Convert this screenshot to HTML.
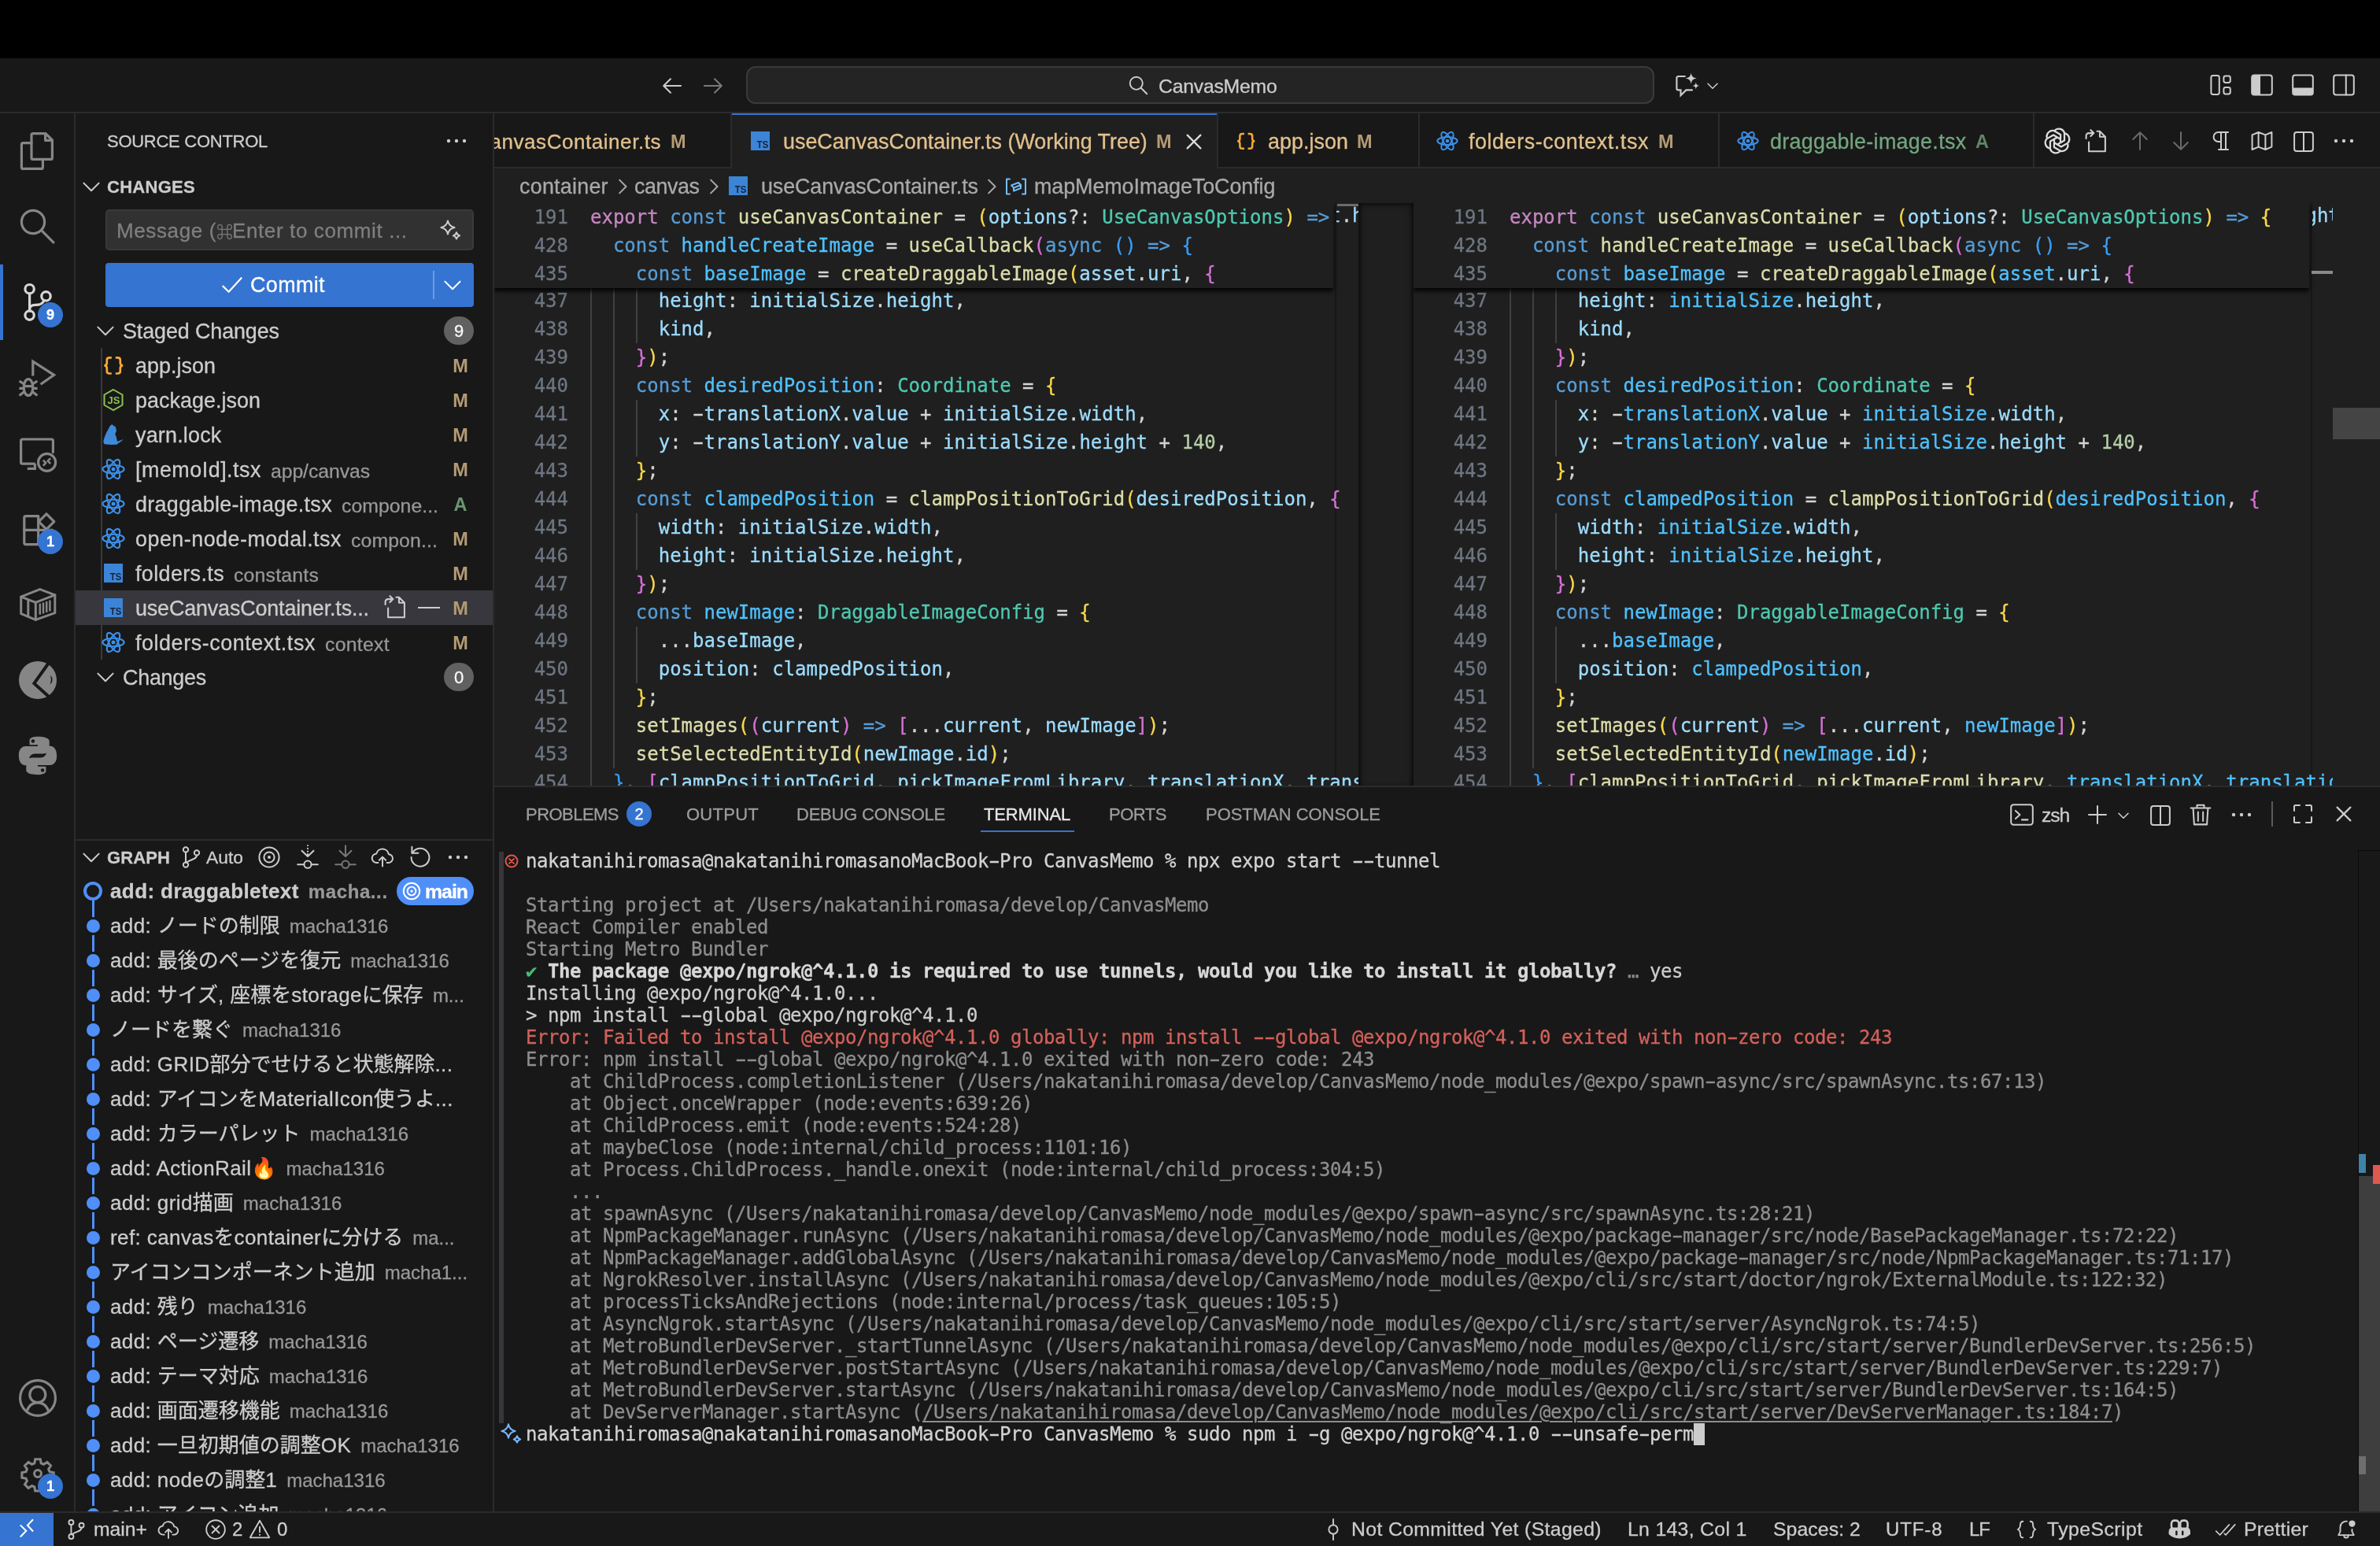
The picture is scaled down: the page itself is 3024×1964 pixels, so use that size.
<!DOCTYPE html>
<html lang="ja"><head><meta charset="utf-8"><title>CanvasMemo</title>
<style>
html,body{margin:0;padding:0;background:#181818;}
body{width:3024px;height:1964px;position:relative;overflow:hidden;font-family:"Liberation Sans","Noto Sans CJK JP",sans-serif;color:#ccc;-webkit-font-smoothing:antialiased;}
.t{position:absolute;white-space:pre;-webkit-text-stroke:0.3px currentColor;}
.b{position:absolute;}
.i{position:absolute;overflow:visible;}
.mono{font-family:"DejaVu Sans Mono","Liberation Mono",monospace;}
.clip{position:absolute;overflow:hidden;}
.cl,.ln,.tl{-webkit-text-stroke:0.3px currentColor;}
.cl{position:absolute;left:0;height:36px;line-height:36px;font-size:24px;white-space:pre;font-family:"DejaVu Sans Mono","Liberation Mono",monospace;color:#d4d4d4;letter-spacing:0px;}
.ln{position:absolute;height:36px;line-height:36px;font-size:24px;white-space:pre;font-family:"DejaVu Sans Mono","Liberation Mono",monospace;color:#6e7681;text-align:right;width:80px;}
.tl{position:absolute;left:0;height:28px;line-height:28px;font-size:24px;white-space:pre;font-family:"DejaVu Sans Mono","Liberation Mono",monospace;color:#ccc;letter-spacing:-0.45px;}
.hy{display:inline-block;transform:scaleX(1.75);}
.k{color:#569cd6}.e{color:#c586c0}.f{color:#dcdcaa}.v{color:#9cdcfe}.c{color:#4fc1ff}.ty{color:#4ec9b0}.n{color:#b5cea8}
.b1{color:#f9d849}.b2{color:#d670d6}.b3{color:#3a9cf5}
.jp{font-family:"Liberation Sans","Noto Sans CJK JP",sans-serif;}
</style></head><body><div id="root" style="position:absolute;left:0;top:0;width:3024px;height:1964px;overflow:hidden;will-change:transform;">

<div class="b" style="left:0px;top:0px;width:3024px;height:74px;background:#000;"></div>
<div class="b" style="left:0px;top:74px;width:3024px;height:68px;background:#181818;"></div>
<div class="b" style="left:0px;top:142px;width:3024px;height:2px;background:#2b2b2b;"></div>
<svg class="i" style="left:838.0px;top:93.0px;color:#ccc;" width="32" height="32" viewBox="0 0 16 16" fill="none" stroke="currentColor" stroke-width="1" stroke-linecap="round" stroke-linejoin="round"><path d="M13.5 8H2.8M7 3.6 2.6 8 7 12.4"/></svg>
<svg class="i" style="left:890.0px;top:93.0px;color:#7a7a7a;" width="32" height="32" viewBox="0 0 16 16" fill="none" stroke="currentColor" stroke-width="1" stroke-linecap="round" stroke-linejoin="round"><path d="M2.5 8h10.7M9 3.6 13.4 8 9 12.4"/></svg>
<div class="b" style="left:948px;top:84px;width:1154px;height:48px;background:#242424;border:2px solid #3a3a3a;box-sizing:border-box;border-radius:12px;"></div>
<svg class="i" style="left:1431.0px;top:93.0px;color:#ccc;" width="30" height="30" viewBox="0 0 16 16" fill="none" stroke="currentColor" stroke-width="1" stroke-linecap="round" stroke-linejoin="round"><circle cx="6.8" cy="6.8" r="4.3"/><path d="M10 10l4 4"/></svg>
<div class="t" style="left:1472px;top:91.5px;height:35px;line-height:35px;font-size:24.8px;color:#ccc;letter-spacing:-0.249px;">CanvasMemo</div>
<svg class="i" style="left:2127.0px;top:91.0px;color:#ccc;" width="34" height="34" viewBox="0 0 16 16" fill="none" stroke="currentColor" stroke-width="1" stroke-linecap="round" stroke-linejoin="round"><path d="M6.500 2.800H2.600a1 1 0 0 0-1 1V10a1 1 0 0 0 1 1H4v3.200L7.200 11h3.600" stroke-linejoin="miter"/><path d="M10.200 .75c.5 2.300 1 2.800 3.300 3.300-2.300.5-2.800 1-3.300 3.300-.5-2.300-1-2.800-3.300-3.300 2.300-.5 2.800-1 3.300-3.300z" fill="currentColor" stroke="none"/><path d="M13.100 6.400c.3 1.500.6 1.800 2.100 2.100-1.500.3-1.800.6-2.100 2.100-.3-1.500-.6-1.800-2.100-2.100 1.500-.3 1.800-.6 2.100-2.100z" fill="currentColor" stroke="none"/></svg>
<svg class="i" style="left:2166.0px;top:99.0px;color:#ccc;" width="20" height="20" viewBox="0 0 16 16" fill="none" stroke="currentColor" stroke-width="1.2" stroke-linecap="round" stroke-linejoin="round"><path d="M3.2 5.8 8 10.6l4.8-4.8"/></svg>
<svg class="i" style="left:2806.0px;top:92.0px;color:#ccc;" width="32" height="32" viewBox="0 0 16 16" fill="none" stroke="currentColor" stroke-width="1" stroke-linecap="round" stroke-linejoin="round"><rect x="1.700" y="2" width="5.200" height="12" rx="1.200"/><rect x="9.700" y="2.300" width="4.200" height="4.200" rx="1.200"/><rect x="9.700" y="9.500" width="4.200" height="4.200" rx="1.200"/></svg>
<svg class="i" style="left:2858.0px;top:92.0px;color:#ccc;" width="32" height="32" viewBox="0 0 16 16" fill="none" stroke="currentColor" stroke-width="1" stroke-linecap="round" stroke-linejoin="round"><rect x="1.600" y="1.700" width="12.800" height="12.600" rx="1.500"/><path d="M2 3a1 1 0 0 1 1-1h4v12H3a1 1 0 0 1-1-1z" fill="currentColor" stroke="none"/></svg>
<svg class="i" style="left:2910.0px;top:92.0px;color:#ccc;" width="32" height="32" viewBox="0 0 16 16" fill="none" stroke="currentColor" stroke-width="1" stroke-linecap="round" stroke-linejoin="round"><rect x="1.600" y="1.700" width="12.800" height="12.600" rx="1.500"/><path d="M2 9.800h12v3.200a1 1 0 0 1-1 1H3a1 1 0 0 1-1-1z" fill="currentColor" stroke="none"/></svg>
<svg class="i" style="left:2962.0px;top:92.0px;color:#ccc;" width="32" height="32" viewBox="0 0 16 16" fill="none" stroke="currentColor" stroke-width="1" stroke-linecap="round" stroke-linejoin="round"><rect x="1.600" y="1.700" width="12.800" height="12.600" rx="1.500"/><path d="M9.400 1.700v12.600"/></svg>
<div class="b" style="left:0px;top:144px;width:94px;height:1776px;background:#181818;"></div>
<div class="b" style="left:94px;top:144px;width:2px;height:1776px;background:#2b2b2b;"></div>
<svg class="i" style="left:24.0px;top:168.0px;color:#868686;" width="48" height="48" viewBox="0 0 24 24" fill="none" stroke="currentColor" stroke-width="1.6" stroke-linecap="round" stroke-linejoin="round"><path d="M9 .8h8L21.200 5v11.200a1 1 0 0 1-1 1H9a1 1 0 0 1-1-1V1.800a1 1 0 0 1 1-1z"/><path d="M16.800 .8v4.400h4.400"/><path d="M8 6.800H2.700a1 1 0 0 0-1 1v14.400a1 1 0 0 0 1 1h11.500a1 1 0 0 0 1-1v-5"/></svg>
<svg class="i" style="left:24.0px;top:264.0px;color:#868686;" width="48" height="48" viewBox="0 0 24 24" fill="none" stroke="currentColor" stroke-width="1.6" stroke-linecap="round" stroke-linejoin="round"><circle cx="9" cy="9" r="7.300"/><path d="M14.200 14.200 22.400 22.400" stroke-linecap="butt"/></svg>
<div class="b" style="left:0px;top:336px;width:4px;height:96px;background:#3574d1;"></div>
<svg class="i" style="left:24.0px;top:360.0px;color:#d7d7d7;" width="48" height="48" viewBox="0 0 24 24" fill="none" stroke="currentColor" stroke-width="1.6" stroke-linecap="round" stroke-linejoin="round"><circle cx="6.800" cy="3.600" r="2.850"/><circle cx="6.800" cy="20.300" r="2.850"/><circle cx="17.250" cy="8.200" r="2.850"/><path d="M6.800 6.500v11M16 10.800c-1 2.600-3 2.900-5.500 2.900-2.200 0-3.700 1-3.700 3"/></svg>
<svg class="i" style="left:24.0px;top:456.0px;color:#868686;" width="48" height="48" viewBox="0 0 24 24" fill="none" stroke="currentColor" stroke-width="1.6" stroke-linecap="round" stroke-linejoin="round"><path d="M8.900 10.800V1.600L22.300 10.200 13.800 16.100" stroke-linecap="butt" stroke-linejoin="miter"/><ellipse cx="6" cy="18" rx="2.900" ry="5.200"/><path d="M3.100 17.300h5.800M.2 18.700h2.900M8.900 18.700h2.900M.3 14l3 2M11.700 14l-3 2M.3 23.300l3-2.400M11.700 23.300l-3-2.400" stroke-linecap="butt"/></svg>
<svg class="i" style="left:24.0px;top:552.0px;color:#868686;" width="48" height="48" viewBox="0 0 24 24" fill="none" stroke="currentColor" stroke-width="1.6" stroke-linecap="round" stroke-linejoin="round"><path d="M9.800 18.600H2.300a1 1 0 0 1-1-1V4a1 1 0 0 1 1-1h18.400a1 1 0 0 1 1 1v7.200"/><path d="M5.400 21.700h5.600M10.200 18.600v3.100" stroke-linecap="butt"/><circle cx="17.800" cy="17.700" r="5.500"/><path d="M15.400 16.300l1.700 1.700-1.700 1.800M20.100 15.100l-1.800 1.700 1.800 1.700" stroke-width="1.300" stroke-linecap="butt"/></svg>
<svg class="i" style="left:24.0px;top:648.0px;color:#868686;" width="48" height="48" viewBox="0 0 24 24" fill="none" stroke="currentColor" stroke-width="1.6" stroke-linecap="round" stroke-linejoin="round"><path d="M12.350 3.850H4.400a1 1 0 0 0-1 1v15.950a1 1 0 0 0 1 1h15.900a1 1 0 0 0 1-1v-8.150H12.350z" /><path d="M3.400 12.650h9M12.350 12.650v9.100"/><path d="M17.500 2.400l4.900 4.900-4.900 4.900-4.900-4.900z"/></svg>
<svg class="i" style="left:24.0px;top:744.0px;color:#868686;" width="48" height="48" viewBox="0 0 24 24" fill="none" stroke="currentColor" stroke-width="1.6" stroke-linecap="round" stroke-linejoin="round"><g stroke-width="1.500"><path d="M13.350 2.300 22.900 5.900v11.450L10.650 21.700 1.350 17.800V7.100z"/><path d="M1.350 7.100l9.300 3.550L22.900 5.900M10.650 10.650V21.700M5.900 9v10.600"/><path d="M13.400 11.400v7M15.500 10.700v7M17.600 10v7M19.700 9.300v7" stroke-width="1.250" stroke-linecap="butt"/></g></svg>
<svg class="i" style="left:24.0px;top:840.0px;color:#868686;" width="48" height="48" viewBox="0 0 24 24" fill="none" stroke="currentColor" stroke-width="1.6" stroke-linecap="round" stroke-linejoin="round"><circle cx="12" cy="12" r="12" fill="currentColor" stroke="none"/><path d="M19 1 9.700 14.100 19 22.500" stroke="#181818" stroke-width="2" fill="none" stroke-linecap="butt" stroke-linejoin="miter"/><path d="M20 9.200c1.600.3 1.900 4.600-.3 5.300.9-1.700.9-3.600.3-5.300z" fill="#181818" stroke="none"/></svg>
<svg class="i" style="left:24.0px;top:936.0px;color:#868686;" width="48" height="48" viewBox="0 0 24 24" fill="none" stroke="currentColor" stroke-width="1.6" stroke-linecap="round" stroke-linejoin="round"><g transform="translate(12 12) scale(1.270) translate(-12 -12)"><path d="M11.900 2.500c-4.200 0-4 1.800-4 1.800v2.300h4.100v.7H6.200S2.500 6.900 2.500 11.900s3.200 4.900 3.200 4.900h1.900v-2.600s-.1-3.200 3.200-3.200h4s3 .1 3-2.900V4.900s.5-2.400-5.900-2.400zM9.600 3.800a.9.900 0 1 1 0 1.800.9.900 0 0 1 0-1.800z" fill="currentColor" stroke="none"/><path d="M12.100 21.500c4.200 0 4-1.800 4-1.800v-2.300H12v-.7h5.800s3.700.4 3.700-4.600-3.200-4.900-3.200-4.900h-1.900v2.600s.1 3.200-3.200 3.200h-4s-3-.1-3 2.900v3.200s-.5 2.400 5.900 2.400zm2.300-1.300a.9.900 0 1 1 0-1.800.9.900 0 0 1 0 1.800z" fill="currentColor" stroke="none"/></g></svg>
<svg class="i" style="left:24.0px;top:1752.0px;color:#868686;" width="48" height="48" viewBox="0 0 24 24" fill="none" stroke="currentColor" stroke-width="1.6" stroke-linecap="round" stroke-linejoin="round"><circle cx="12" cy="12" r="11.200"/><circle cx="11.900" cy="9.850" r="5"/><path d="M4.900 20.600c1.300-3.700 3.800-5.700 7-5.700s5.800 2 7.100 5.700"/></svg>
<svg class="i" style="left:24.0px;top:1848.0px;color:#868686;" width="48" height="48" viewBox="0 0 24 24" fill="none" stroke="currentColor" stroke-width="1.6" stroke-linecap="round" stroke-linejoin="round"><g transform="translate(12 12) scale(0.960) translate(-12 -12)"><circle cx="12" cy="12" r="2.300"/><path d="M10.300 2.500h3.400l.5 2.700 1.700.7 2.300-1.500 2.400 2.400-1.500 2.300.7 1.700 2.700.5v3.400l-2.700.5-.7 1.700 1.500 2.300-2.400 2.400-2.300-1.500-1.700.7-.5 2.700h-3.400l-.5-2.700-1.700-.7-2.300 1.500-2.400-2.400 1.500-2.300-.7-1.700-2.700-.5v-3.400l2.700-.5.700-1.700-1.500-2.300 2.400-2.400 2.300 1.500 1.700-.7z" stroke-linejoin="miter"/></g></svg>
<div class="b" style="left:48px;top:384px;width:32px;height:32px;background:#3574d1;border-radius:16px;"></div>
<div class="t" style="left:48px;top:387.5px;height:25px;line-height:25px;font-size:18px;color:#fff;font-weight:700;width:32px;text-align:center;">9</div>
<div class="b" style="left:48px;top:672px;width:32px;height:32px;background:#3574d1;border-radius:16px;"></div>
<div class="t" style="left:48px;top:675.5px;height:25px;line-height:25px;font-size:18px;color:#fff;font-weight:700;width:32px;text-align:center;">1</div>
<div class="b" style="left:48px;top:1872px;width:32px;height:32px;background:#3574d1;border-radius:16px;"></div>
<div class="t" style="left:48px;top:1875.5px;height:25px;line-height:25px;font-size:18px;color:#fff;font-weight:700;width:32px;text-align:center;">1</div>
<div class="b" style="left:96px;top:144px;width:530px;height:1776px;background:#181818;"></div>
<div class="b" style="left:626px;top:144px;width:2px;height:1776px;background:#2b2b2b;"></div>
<div class="t" style="left:136px;top:163.5px;height:31px;line-height:31px;font-size:22px;color:#ccc;letter-spacing:-0.271px;">SOURCE CONTROL</div>
<svg class="i" style="left:564.0px;top:163.0px;color:#ccc;" width="32" height="32" viewBox="0 0 16 16" fill="none" stroke="currentColor" stroke-width="1" stroke-linecap="round" stroke-linejoin="round"><g fill="currentColor" stroke="none"><circle cx="3" cy="8" r="1.100"/><circle cx="8" cy="8" r="1.100"/><circle cx="13" cy="8" r="1.100"/></g></svg>
<svg class="i" style="left:100.0px;top:221.0px;color:#ccc;" width="32" height="32" viewBox="0 0 16 16" fill="none" stroke="currentColor" stroke-width="1" stroke-linecap="round" stroke-linejoin="round"><path d="M3.2 5.8 8 10.6l4.8-4.8"/></svg>
<div class="t" style="left:136px;top:221.5px;height:31px;line-height:31px;font-size:22px;color:#ccc;font-weight:700;letter-spacing:0.284px;">CHANGES</div>
<div class="b" style="left:134px;top:266px;width:468px;height:52px;background:#313131;border-radius:5px;border:2px solid #3a3a3a;box-sizing:border-box;"></div>
<div class="t" style="left:148px;top:275.0px;height:36px;line-height:36px;font-size:26px;color:#7f7f7f;letter-spacing:0.620px;">Message (<span style="font-size:21px;letter-spacing:-1px">⌘</span>Enter to commit ...</div>
<svg class="i" style="left:556.0px;top:276.0px;color:#ccc;" width="32" height="32" viewBox="0 0 16 16" fill="none" stroke="currentColor" stroke-width="1" stroke-linecap="round" stroke-linejoin="round"><path d="M6.5 2.2c.5 2.6 1.7 3.8 4.3 4.3-2.6.5-3.8 1.7-4.3 4.3-.5-2.6-1.7-3.8-4.3-4.3 2.6-.5 3.8-1.7 4.3-4.3z"/><path d="M12 9.6c.3 1.3.8 1.8 2.1 2.1-1.3.3-1.8.8-2.1 2.1-.3-1.3-.8-1.8-2.1-2.1 1.3-.3 1.8-.8 2.1-2.1z"/></svg>
<div class="b" style="left:134px;top:334px;width:468px;height:56px;background:#3574d1;border-radius:4px;"></div>
<svg class="i" style="left:279.0px;top:346.0px;color:#fff;" width="32" height="32" viewBox="0 0 16 16" fill="none" stroke="currentColor" stroke-width="1.1" stroke-linecap="round" stroke-linejoin="round"><path d="M2.2 8.8 5.8 12.4 13.8 3.6"/></svg>
<div class="t" style="left:318px;top:343.0px;height:38px;line-height:38px;font-size:26.9px;color:#fff;letter-spacing:0.391px;">Commit</div>
<div class="b" style="left:550px;top:344px;width:2px;height:36px;background:#6f9be0;"></div>
<svg class="i" style="left:559.0px;top:346.0px;color:#fff;" width="32" height="32" viewBox="0 0 16 16" fill="none" stroke="currentColor" stroke-width="1" stroke-linecap="round" stroke-linejoin="round"><path d="M3.2 5.8 8 10.6l4.8-4.8"/></svg>
<svg class="i" style="left:118.0px;top:404.0px;color:#ccc;" width="32" height="32" viewBox="0 0 16 16" fill="none" stroke="currentColor" stroke-width="1" stroke-linecap="round" stroke-linejoin="round"><path d="M3.2 5.8 8 10.6l4.8-4.8"/></svg>
<div class="t" style="left:156px;top:402.0px;height:38px;line-height:38px;font-size:26.9px;color:#ccc;letter-spacing:-0.101px;">Staged Changes</div>
<div class="b" style="left:564px;top:402px;width:38px;height:36px;background:#616161;border-radius:18px;"></div>
<div class="t" style="left:564px;top:404.5px;height:31px;line-height:31px;font-size:22px;color:#f8f8f8;width:38px;text-align:center;">9</div>
<div class="b" style="left:128px;top:442px;width:2px;height:396px;background:#3a3a3a;"></div>
<svg class="i" style="left:130.0px;top:450.0px" width="28" height="28" viewBox="0 0 28 28" fill="none" stroke="#f5a93a" stroke-width="2.700" stroke-linecap="butt"><path d="M11.800 4.300H9q-3.200 0-3.200 3V11q0 3.350-3.400 3.350 3.400 0 3.400 3.350v3.800q0 3 3.200 3h2.800"/><path d="M16.800 4.300h2.800q3.200 0 3.200 3V11q0 3.350 3.400 3.350-3.400 0-3.400 3.350v3.800q0 3-3.200 3h-2.800"/></svg>
<div class="t" style="left:172px;top:446.0px;height:38px;line-height:38px;font-size:26.9px;color:#ccc;letter-spacing:0.037px;">app.json</div>
<div class="t" style="left:566px;top:448.5px;height:33px;line-height:33px;font-size:23.5px;color:#b49b73;font-weight:700;width:38px;text-align:center;-webkit-text-stroke:0;">M</div>
<svg class="i" style="left:131.0px;top:493.0px" width="26" height="30" viewBox="0 0 26 30"><path d="M13 2 24.500 8.500v13L13 28 1.500 21.500v-13z" fill="none" stroke="#8cc152" stroke-width="2"/><text x="13.500" y="20" text-anchor="middle" font-family="Liberation Sans,sans-serif" font-weight="700" font-size="13" fill="#8cc152">JS</text></svg>
<div class="t" style="left:172px;top:490.0px;height:38px;line-height:38px;font-size:26.9px;color:#ccc;letter-spacing:0.039px;">package.json</div>
<div class="t" style="left:566px;top:492.5px;height:33px;line-height:33px;font-size:23.5px;color:#b49b73;font-weight:700;width:38px;text-align:center;-webkit-text-stroke:0;">M</div>
<svg class="i" style="left:130.0px;top:538.0px" width="28" height="28" viewBox="0 0 28 28"><path d="M12.100 1.200c1.300.3 2 1.100 2.300 2.300l1.800-.5c.5 1.900 1.600 3.600 1.700 5.800 0 1.800-1.100 3-1.700 4.600 1 2 2 4.300 2.300 7 .1.800.3 1.500.6 2.300 2.600-.5 5.200-1.700 7.600-2.900-1.600 2.300-4.300 4.300-7 5.800-.4.800-1 1.200-1.800 1.200-5 .2-10.100.1-15.100-.6-1.300-1-1.500-2.900-1.200-4.600.5-2.500 1.400-4.700 2.400-7 .9-2.400 2-4.700 3.500-7 .6-1.200 1-2.400 1.700-3.500.7-1.300 1.800-2.300 2.900-2.900z" fill="#3f8ad8"/></svg>
<div class="t" style="left:172px;top:534.0px;height:38px;line-height:38px;font-size:26.9px;color:#ccc;letter-spacing:0.207px;">yarn.lock</div>
<div class="t" style="left:566px;top:536.5px;height:33px;line-height:33px;font-size:23.5px;color:#b49b73;font-weight:700;width:38px;text-align:center;-webkit-text-stroke:0;">M</div>
<svg class="i" style="left:129.0px;top:581.0px" width="30" height="30" viewBox="-15 -15 30 30" fill="none" stroke="#3b8fe8" stroke-width="2.100"><ellipse rx="13.600" ry="5.300"/><ellipse rx="13.600" ry="5.300" transform="rotate(60)"/><ellipse rx="13.600" ry="5.300" transform="rotate(120)"/><circle r="2.500" fill="#3b8fe8" stroke="none"/></svg>
<div class="t" style="left:172px;top:578.0px;height:38px;line-height:38px;font-size:26.9px;color:#ccc;letter-spacing:0.503px;">[memoId].tsx</div>
<div class="t" style="left:344px;top:580.5px;height:35px;line-height:35px;font-size:24.8px;color:#989898;letter-spacing:-0.084px;">app/canvas</div>
<div class="t" style="left:566px;top:580.5px;height:33px;line-height:33px;font-size:23.5px;color:#b49b73;font-weight:700;width:38px;text-align:center;-webkit-text-stroke:0;">M</div>
<svg class="i" style="left:129.0px;top:625.0px" width="30" height="30" viewBox="-15 -15 30 30" fill="none" stroke="#3b8fe8" stroke-width="2.100"><ellipse rx="13.600" ry="5.300"/><ellipse rx="13.600" ry="5.300" transform="rotate(60)"/><ellipse rx="13.600" ry="5.300" transform="rotate(120)"/><circle r="2.500" fill="#3b8fe8" stroke="none"/></svg>
<div class="t" style="left:172px;top:622.0px;height:38px;line-height:38px;font-size:26.9px;color:#ccc;letter-spacing:0.330px;">draggable-image.tsx</div>
<div class="t" style="left:434px;top:624.5px;height:35px;line-height:35px;font-size:24.8px;color:#989898;letter-spacing:0.031px;">compone...</div>
<div class="t" style="left:566px;top:624.5px;height:33px;line-height:33px;font-size:23.5px;color:#6a9673;font-weight:700;width:38px;text-align:center;-webkit-text-stroke:0;">A</div>
<svg class="i" style="left:129.0px;top:669.0px" width="30" height="30" viewBox="-15 -15 30 30" fill="none" stroke="#3b8fe8" stroke-width="2.100"><ellipse rx="13.600" ry="5.300"/><ellipse rx="13.600" ry="5.300" transform="rotate(60)"/><ellipse rx="13.600" ry="5.300" transform="rotate(120)"/><circle r="2.500" fill="#3b8fe8" stroke="none"/></svg>
<div class="t" style="left:172px;top:666.0px;height:38px;line-height:38px;font-size:26.9px;color:#ccc;letter-spacing:0.489px;">open-node-modal.tsx</div>
<div class="t" style="left:446px;top:668.5px;height:35px;line-height:35px;font-size:24.8px;color:#989898;letter-spacing:0.122px;">compon...</div>
<div class="t" style="left:566px;top:668.5px;height:33px;line-height:33px;font-size:23.5px;color:#b49b73;font-weight:700;width:38px;text-align:center;-webkit-text-stroke:0;">M</div>
<svg class="i" style="left:132.0px;top:716.0px" width="24" height="24" viewBox="0 0 28 28"><rect x="0" y="0" width="28" height="28" fill="#3c84d6"/><text x="9" y="25" font-family="Liberation Sans,sans-serif" font-weight="700" font-size="14.500" fill="#16233a" textLength="17" lengthAdjust="spacingAndGlyphs">TS</text></svg>
<div class="t" style="left:172px;top:710.0px;height:38px;line-height:38px;font-size:26.9px;color:#ccc;letter-spacing:0.386px;">folders.ts</div>
<div class="t" style="left:297px;top:712.5px;height:35px;line-height:35px;font-size:24.8px;color:#989898;letter-spacing:0.206px;">constants</div>
<div class="t" style="left:566px;top:712.5px;height:33px;line-height:33px;font-size:23.5px;color:#b49b73;font-weight:700;width:38px;text-align:center;-webkit-text-stroke:0;">M</div>
<div class="b" style="left:96px;top:750px;width:530px;height:44px;background:#37373d;"></div>
<svg class="i" style="left:484.5px;top:752.5px;color:#ccc;" width="37" height="37" viewBox="0 0 16 16" fill="none" stroke="currentColor" stroke-width="0.9" stroke-linecap="round" stroke-linejoin="round"><path d="M3.5 8.5v5h9V5.5L9.5 2.5H8M9.5 2.5v3h3"/><path d="M2 6.5V5a1.5 1.5 0 0 1 1.5-1.5H6M4.5 1.8 6.2 3.5 4.5 5.2"/></svg>
<div class="b" style="left:531px;top:771px;width:28px;height:2px;background:#ccc;"></div>
<svg class="i" style="left:132.0px;top:760.0px" width="24" height="24" viewBox="0 0 28 28"><rect x="0" y="0" width="28" height="28" fill="#3c84d6"/><text x="9" y="25" font-family="Liberation Sans,sans-serif" font-weight="700" font-size="14.500" fill="#16233a" textLength="17" lengthAdjust="spacingAndGlyphs">TS</text></svg>
<div class="t" style="left:172px;top:754.0px;height:38px;line-height:38px;font-size:26.9px;color:#ccc;letter-spacing:-0.148px;">useCanvasContainer.ts...</div>
<div class="t" style="left:566px;top:756.5px;height:33px;line-height:33px;font-size:23.5px;color:#b49b73;font-weight:700;width:38px;text-align:center;-webkit-text-stroke:0;">M</div>
<svg class="i" style="left:129.0px;top:801.0px" width="30" height="30" viewBox="-15 -15 30 30" fill="none" stroke="#3b8fe8" stroke-width="2.100"><ellipse rx="13.600" ry="5.300"/><ellipse rx="13.600" ry="5.300" transform="rotate(60)"/><ellipse rx="13.600" ry="5.300" transform="rotate(120)"/><circle r="2.500" fill="#3b8fe8" stroke="none"/></svg>
<div class="t" style="left:172px;top:798.0px;height:38px;line-height:38px;font-size:26.9px;color:#ccc;letter-spacing:0.564px;">folders-context.tsx</div>
<div class="t" style="left:413px;top:800.5px;height:35px;line-height:35px;font-size:24.8px;color:#989898;letter-spacing:0.292px;">context</div>
<div class="t" style="left:566px;top:800.5px;height:33px;line-height:33px;font-size:23.5px;color:#b49b73;font-weight:700;width:38px;text-align:center;-webkit-text-stroke:0;">M</div>
<svg class="i" style="left:118.0px;top:844.0px;color:#ccc;" width="32" height="32" viewBox="0 0 16 16" fill="none" stroke="currentColor" stroke-width="1" stroke-linecap="round" stroke-linejoin="round"><path d="M3.2 5.8 8 10.6l4.8-4.8"/></svg>
<div class="t" style="left:156px;top:842.0px;height:38px;line-height:38px;font-size:26.9px;color:#ccc;letter-spacing:-0.240px;">Changes</div>
<div class="b" style="left:564px;top:842px;width:38px;height:36px;background:#616161;border-radius:18px;"></div>
<div class="t" style="left:564px;top:844.5px;height:31px;line-height:31px;font-size:22px;color:#f8f8f8;width:38px;text-align:center;">0</div>
<div class="b" style="left:96px;top:1066px;width:530px;height:2px;background:#2b2b2b;"></div>
<svg class="i" style="left:100.0px;top:1073.0px;color:#ccc;" width="32" height="32" viewBox="0 0 16 16" fill="none" stroke="currentColor" stroke-width="1" stroke-linecap="round" stroke-linejoin="round"><path d="M3.2 5.8 8 10.6l4.8-4.8"/></svg>
<div class="t" style="left:136px;top:1073.5px;height:31px;line-height:31px;font-size:22px;color:#ccc;font-weight:700;letter-spacing:0.110px;">GRAPH</div>
<svg class="i" style="left:227.0px;top:1073.0px;color:#ccc;" width="32" height="32" viewBox="0 0 16 16" fill="none" stroke="currentColor" stroke-width="1" stroke-linecap="round" stroke-linejoin="round"><circle cx="4.5" cy="3.2" r="1.6"/><circle cx="4.5" cy="12.8" r="1.6"/><circle cx="11.5" cy="5.2" r="1.6"/><path d="M4.5 4.8v6.4M11.5 6.8c0 2.6-3.5 2.2-6.6 4.6"/></svg>
<div class="t" style="left:262px;top:1073.0px;height:32px;line-height:32px;font-size:22.8px;color:#ccc;letter-spacing:0.025px;">Auto</div>
<svg class="i" style="left:326.0px;top:1073.0px;color:#ccc;" width="32" height="32" viewBox="0 0 16 16" fill="none" stroke="currentColor" stroke-width="1" stroke-linecap="round" stroke-linejoin="round"><circle cx="8" cy="8" r="6.3"/><circle cx="8" cy="8" r="3.3"/><circle cx="8" cy="8" r="1" fill="currentColor" stroke="none"/></svg>
<svg class="i" style="left:375.0px;top:1073.0px;color:#ccc;" width="32" height="32" viewBox="0 0 16 16" fill="none" stroke="currentColor" stroke-width="1" stroke-linecap="round" stroke-linejoin="round"><path d="M8 .3v.7M8 2v.9M8 3.900v.9M8 5.600v1.900M4 3.600 8 7.500l4-3.900" stroke-linecap="butt"/><circle cx="8" cy="12.600" r="2.300"/><path d="M1.600 12.600h4.100M10.300 12.600h4.100"/></svg>
<svg class="i" style="left:423.0px;top:1073.0px;color:#777;" width="32" height="32" viewBox="0 0 16 16" fill="none" stroke="currentColor" stroke-width="1" stroke-linecap="round" stroke-linejoin="round"><path d="M8 .3v7.200M4 3.600 8 7.500l4-3.900" stroke-linecap="butt"/><circle cx="8" cy="12.600" r="2.300"/><path d="M1.600 12.600h4.100M10.300 12.600h4.100"/></svg>
<svg class="i" style="left:470.0px;top:1073.0px;color:#ccc;" width="32" height="32" viewBox="0 0 16 16" fill="none" stroke="currentColor" stroke-width="1" stroke-linecap="round" stroke-linejoin="round"><path d="M5.2 11.5H4.4a2.9 2.9 0 0 1-.3-5.8 4 4 0 0 1 7.8.4 2.7 2.7 0 0 1-.2 5.4h-.9"/><path d="M8 13.8V8M5.9 9.9 8 7.8l2.1 2.1"/></svg>
<svg class="i" style="left:518.0px;top:1073.0px;color:#ccc;" width="32" height="32" viewBox="0 0 16 16" fill="none" stroke="currentColor" stroke-width="1" stroke-linecap="round" stroke-linejoin="round"><g transform="translate(16 0) scale(-1 1)"><path d="M12.900 5.200A5.700 5.700 0 1 0 13.700 8"/><path d="M13.300 1.400v4h-4" stroke-linejoin="miter"/></g></svg>
<svg class="i" style="left:566.0px;top:1073.0px;color:#ccc;" width="32" height="32" viewBox="0 0 16 16" fill="none" stroke="currentColor" stroke-width="1" stroke-linecap="round" stroke-linejoin="round"><g fill="currentColor" stroke="none"><circle cx="3" cy="8" r="1.100"/><circle cx="8" cy="8" r="1.100"/><circle cx="13" cy="8" r="1.100"/></g></svg>
<div class="clip" style="left:96px;top:1110px;width:530px;height:810px;">
<div class="b" style="left:20.5px;top:34px;width:3px;height:900px;background:#4f8ff7;"></div>
<div class="b" style="left:10px;top:10px;width:24px;height:24px;border-radius:12px;box-sizing:border-box;border:4px solid #4f8ff7;background:#181818;"></div>
<div class="t jp" style="left:44px;top:4px;height:36px;line-height:36px;font-size:26px;color:#ccc;font-weight:700;"><span style="letter-spacing:0.4px">add: draggabletext</span><span style="font-size:24px;color:#989898;margin-left:12px;letter-spacing:0.6px">macha...</span></div>
<div class="b" style="left:13.5px;top:57.5px;width:17px;height:17px;border-radius:9px;background:#4f8ff7;box-shadow:0 0 0 3px #181818;"></div>
<div class="t jp" style="left:44px;top:48px;height:36px;line-height:36px;font-size:26px;color:#ccc;"><span style="letter-spacing:0.4px">add: </span>ノードの制限<span style="font-size:24px;color:#989898;margin-left:12px;letter-spacing:0px">macha1316</span></div>
<div class="b" style="left:13.5px;top:101.5px;width:17px;height:17px;border-radius:9px;background:#4f8ff7;box-shadow:0 0 0 3px #181818;"></div>
<div class="t jp" style="left:44px;top:92px;height:36px;line-height:36px;font-size:26px;color:#ccc;"><span style="letter-spacing:0.4px">add: </span>最後のページを復元<span style="font-size:24px;color:#989898;margin-left:12px;letter-spacing:0px">macha1316</span></div>
<div class="b" style="left:13.5px;top:145.5px;width:17px;height:17px;border-radius:9px;background:#4f8ff7;box-shadow:0 0 0 3px #181818;"></div>
<div class="t jp" style="left:44px;top:136px;height:36px;line-height:36px;font-size:26px;color:#ccc;"><span style="letter-spacing:0.4px">add: </span>サイズ<span style="letter-spacing:0.4px">, </span>座標を<span style="letter-spacing:0.4px">storage</span>に保存<span style="font-size:24px;color:#989898;margin-left:12px;letter-spacing:0px">m...</span></div>
<div class="b" style="left:13.5px;top:189.5px;width:17px;height:17px;border-radius:9px;background:#4f8ff7;box-shadow:0 0 0 3px #181818;"></div>
<div class="t jp" style="left:44px;top:180px;height:36px;line-height:36px;font-size:26px;color:#ccc;">ノードを繋ぐ<span style="font-size:24px;color:#989898;margin-left:12px;letter-spacing:0px">macha1316</span></div>
<div class="b" style="left:13.5px;top:233.5px;width:17px;height:17px;border-radius:9px;background:#4f8ff7;box-shadow:0 0 0 3px #181818;"></div>
<div class="t jp" style="left:44px;top:224px;height:36px;line-height:36px;font-size:26px;color:#ccc;"><span style="letter-spacing:0.4px">add: GRID</span>部分でせけると状態解除<span style="letter-spacing:0.4px">...</span><span style="font-size:24px;color:#989898;margin-left:12px;letter-spacing:0px"></span></div>
<div class="b" style="left:13.5px;top:277.5px;width:17px;height:17px;border-radius:9px;background:#4f8ff7;box-shadow:0 0 0 3px #181818;"></div>
<div class="t jp" style="left:44px;top:268px;height:36px;line-height:36px;font-size:26px;color:#ccc;"><span style="letter-spacing:0.4px">add: </span>アイコンを<span style="letter-spacing:0.4px">MaterialIcon</span>使うよ<span style="letter-spacing:0.4px">...</span><span style="font-size:24px;color:#989898;margin-left:12px;letter-spacing:0px"></span></div>
<div class="b" style="left:13.5px;top:321.5px;width:17px;height:17px;border-radius:9px;background:#4f8ff7;box-shadow:0 0 0 3px #181818;"></div>
<div class="t jp" style="left:44px;top:312px;height:36px;line-height:36px;font-size:26px;color:#ccc;"><span style="letter-spacing:0.4px">add: </span>カラーパレット<span style="font-size:24px;color:#989898;margin-left:12px;letter-spacing:0px">macha1316</span></div>
<div class="b" style="left:13.5px;top:365.5px;width:17px;height:17px;border-radius:9px;background:#4f8ff7;box-shadow:0 0 0 3px #181818;"></div>
<div class="t jp" style="left:44px;top:356px;height:36px;line-height:36px;font-size:26px;color:#ccc;"><span style="letter-spacing:0.4px">add: ActionRail</span>🔥<span style="font-size:24px;color:#989898;margin-left:12px;letter-spacing:0px">macha1316</span></div>
<div class="b" style="left:13.5px;top:409.5px;width:17px;height:17px;border-radius:9px;background:#4f8ff7;box-shadow:0 0 0 3px #181818;"></div>
<div class="t jp" style="left:44px;top:400px;height:36px;line-height:36px;font-size:26px;color:#ccc;"><span style="letter-spacing:0.4px">add: grid</span>描画<span style="font-size:24px;color:#989898;margin-left:12px;letter-spacing:0px">macha1316</span></div>
<div class="b" style="left:13.5px;top:453.5px;width:17px;height:17px;border-radius:9px;background:#4f8ff7;box-shadow:0 0 0 3px #181818;"></div>
<div class="t jp" style="left:44px;top:444px;height:36px;line-height:36px;font-size:26px;color:#ccc;"><span style="letter-spacing:0.4px">ref: canvas</span>を<span style="letter-spacing:0.4px">container</span>に分ける<span style="font-size:24px;color:#989898;margin-left:12px;letter-spacing:0px">ma...</span></div>
<div class="b" style="left:13.5px;top:497.5px;width:17px;height:17px;border-radius:9px;background:#4f8ff7;box-shadow:0 0 0 3px #181818;"></div>
<div class="t jp" style="left:44px;top:488px;height:36px;line-height:36px;font-size:26px;color:#ccc;">アイコンコンポーネント追加<span style="font-size:24px;color:#989898;margin-left:12px;letter-spacing:0px">macha1...</span></div>
<div class="b" style="left:13.5px;top:541.5px;width:17px;height:17px;border-radius:9px;background:#4f8ff7;box-shadow:0 0 0 3px #181818;"></div>
<div class="t jp" style="left:44px;top:532px;height:36px;line-height:36px;font-size:26px;color:#ccc;"><span style="letter-spacing:0.4px">add: </span>残り<span style="font-size:24px;color:#989898;margin-left:12px;letter-spacing:0px">macha1316</span></div>
<div class="b" style="left:13.5px;top:585.5px;width:17px;height:17px;border-radius:9px;background:#4f8ff7;box-shadow:0 0 0 3px #181818;"></div>
<div class="t jp" style="left:44px;top:576px;height:36px;line-height:36px;font-size:26px;color:#ccc;"><span style="letter-spacing:0.4px">add: </span>ページ遷移<span style="font-size:24px;color:#989898;margin-left:12px;letter-spacing:0px">macha1316</span></div>
<div class="b" style="left:13.5px;top:629.5px;width:17px;height:17px;border-radius:9px;background:#4f8ff7;box-shadow:0 0 0 3px #181818;"></div>
<div class="t jp" style="left:44px;top:620px;height:36px;line-height:36px;font-size:26px;color:#ccc;"><span style="letter-spacing:0.4px">add: </span>テーマ対応<span style="font-size:24px;color:#989898;margin-left:12px;letter-spacing:0px">macha1316</span></div>
<div class="b" style="left:13.5px;top:673.5px;width:17px;height:17px;border-radius:9px;background:#4f8ff7;box-shadow:0 0 0 3px #181818;"></div>
<div class="t jp" style="left:44px;top:664px;height:36px;line-height:36px;font-size:26px;color:#ccc;"><span style="letter-spacing:0.4px">add: </span>画面遷移機能<span style="font-size:24px;color:#989898;margin-left:12px;letter-spacing:0px">macha1316</span></div>
<div class="b" style="left:13.5px;top:717.5px;width:17px;height:17px;border-radius:9px;background:#4f8ff7;box-shadow:0 0 0 3px #181818;"></div>
<div class="t jp" style="left:44px;top:708px;height:36px;line-height:36px;font-size:26px;color:#ccc;"><span style="letter-spacing:0.4px">add: </span>一旦初期値の調整<span style="letter-spacing:0.4px">OK</span><span style="font-size:24px;color:#989898;margin-left:12px;letter-spacing:0px">macha1316</span></div>
<div class="b" style="left:13.5px;top:761.5px;width:17px;height:17px;border-radius:9px;background:#4f8ff7;box-shadow:0 0 0 3px #181818;"></div>
<div class="t jp" style="left:44px;top:752px;height:36px;line-height:36px;font-size:26px;color:#ccc;"><span style="letter-spacing:0.4px">add: node</span>の調整<span style="letter-spacing:0.4px">1</span><span style="font-size:24px;color:#989898;margin-left:12px;letter-spacing:0px">macha1316</span></div>
<div class="b" style="left:13.5px;top:805.5px;width:17px;height:17px;border-radius:9px;background:#4f8ff7;box-shadow:0 0 0 3px #181818;"></div>
<div class="t jp" style="left:44px;top:796px;height:36px;line-height:36px;font-size:26px;color:#ccc;"><span style="letter-spacing:0.4px">add: </span>アイコン追加<span style="font-size:24px;color:#989898;margin-left:12px;letter-spacing:0px">macha1316</span></div>
<div class="b" style="left:408px;top:4px;width:98px;height:36px;border-radius:18px;background:#4f8ff7;"></div>
</div>
<svg class="i" style="left:510.0px;top:1119.0px;color:#fff;" width="26" height="26" viewBox="0 0 16 16" fill="none" stroke="currentColor" stroke-width="1.2" stroke-linecap="round" stroke-linejoin="round"><circle cx="8" cy="8" r="6.3"/><circle cx="8" cy="8" r="3.3"/><circle cx="8" cy="8" r="1" fill="currentColor" stroke="none"/></svg>
<div class="t" style="left:540px;top:1114.5px;height:35px;line-height:35px;font-size:24.8px;color:#fff;font-weight:700;letter-spacing:-0.971px;">main</div>
<div class="b" style="left:628px;top:144px;width:2396px;height:70px;background:#181818;"></div>
<div class="b" style="left:628px;top:212px;width:2396px;height:2px;background:#2b2b2b;"></div>
<div class="b" style="left:628px;top:214px;width:2396px;height:784px;background:#1f1f1f;"></div>
<div class="clip" style="left:628px;top:144px;width:300px;height:68px;">
<div class="t" style="right:88px;top:18px;height:36px;line-height:36px;font-size:26px;color:#e2c08d;letter-spacing:0.55px;">useCanvasContainer.ts</div>
</div>
<div class="t" style="left:852px;top:164.0px;height:33px;line-height:33px;font-size:23.5px;color:#b49b73;font-weight:700;-webkit-text-stroke:0;">M</div>
<div class="b" style="left:928px;top:144px;width:2px;height:70px;background:#2b2b2b;"></div>
<div class="b" style="left:930px;top:144px;width:616px;height:70px;background:#1f1f1f;"></div>
<div class="b" style="left:930px;top:144px;width:616px;height:2px;background:#3574d1;"></div>
<div class="b" style="left:1546px;top:144px;width:2px;height:70px;background:#2b2b2b;"></div>
<svg class="i" style="left:954.0px;top:167.0px" width="24" height="24" viewBox="0 0 28 28"><rect x="0" y="0" width="28" height="28" fill="#3c84d6"/><text x="9" y="25" font-family="Liberation Sans,sans-serif" font-weight="700" font-size="14.500" fill="#16233a" textLength="17" lengthAdjust="spacingAndGlyphs">TS</text></svg>
<div class="t" style="left:995px;top:161.0px;height:38px;line-height:38px;font-size:26.9px;color:#e2c08d;letter-spacing:0.000px;">useCanvasContainer.ts (Working Tree)</div>
<div class="t" style="left:1469px;top:164.0px;height:33px;line-height:33px;font-size:23.5px;color:#b49b73;font-weight:700;-webkit-text-stroke:0;">M</div>
<svg class="i" style="left:1501.0px;top:164.0px;color:#ddd;" width="32" height="32" viewBox="0 0 16 16" fill="none" stroke="currentColor" stroke-width="1.1" stroke-linecap="round" stroke-linejoin="round"><path d="M3.800 3.800l8.400 8.400M12.200 3.800l-8.400 8.400"/></svg>
<svg class="i" style="left:1570.0px;top:166.0px" width="26" height="26" viewBox="0 0 28 28" fill="none" stroke="#f5a93a" stroke-width="2.700" stroke-linecap="butt"><path d="M11.800 4.300H9q-3.200 0-3.200 3V11q0 3.350-3.400 3.350 3.400 0 3.400 3.350v3.800q0 3 3.200 3h2.800"/><path d="M16.800 4.300h2.800q3.200 0 3.200 3V11q0 3.350 3.400 3.350-3.400 0-3.400 3.350v3.800q0 3-3.200 3h-2.800"/></svg>
<div class="t" style="left:1611px;top:161.0px;height:38px;line-height:38px;font-size:26.9px;color:#e2c08d;letter-spacing:0.037px;">app.json</div>
<div class="t" style="left:1724px;top:164.0px;height:33px;line-height:33px;font-size:23.5px;color:#b49b73;font-weight:700;-webkit-text-stroke:0;">M</div>
<div class="b" style="left:1802px;top:144px;width:2px;height:70px;background:#2b2b2b;"></div>
<svg class="i" style="left:1825.0px;top:165.0px" width="28" height="28" viewBox="-15 -15 30 30" fill="none" stroke="#3b8fe8" stroke-width="2.100"><ellipse rx="13.600" ry="5.300"/><ellipse rx="13.600" ry="5.300" transform="rotate(60)"/><ellipse rx="13.600" ry="5.300" transform="rotate(120)"/><circle r="2.500" fill="#3b8fe8" stroke="none"/></svg>
<div class="t" style="left:1866px;top:161.0px;height:38px;line-height:38px;font-size:26.9px;color:#e2c08d;letter-spacing:0.564px;">folders-context.tsx</div>
<div class="t" style="left:2107px;top:164.0px;height:33px;line-height:33px;font-size:23.5px;color:#b49b73;font-weight:700;-webkit-text-stroke:0;">M</div>
<div class="b" style="left:2183px;top:144px;width:2px;height:70px;background:#2b2b2b;"></div>
<svg class="i" style="left:2207.0px;top:165.0px" width="28" height="28" viewBox="-15 -15 30 30" fill="none" stroke="#3b8fe8" stroke-width="2.100"><ellipse rx="13.600" ry="5.300"/><ellipse rx="13.600" ry="5.300" transform="rotate(60)"/><ellipse rx="13.600" ry="5.300" transform="rotate(120)"/><circle r="2.500" fill="#3b8fe8" stroke="none"/></svg>
<div class="t" style="left:2249px;top:161.0px;height:38px;line-height:38px;font-size:26.9px;color:#73a57f;letter-spacing:0.304px;">draggable-image.tsx</div>
<div class="t" style="left:2510px;top:164.0px;height:33px;line-height:33px;font-size:23.5px;color:#5e8668;font-weight:700;-webkit-text-stroke:0;">A</div>
<div class="b" style="left:2583px;top:144px;width:2px;height:70px;background:#2b2b2b;"></div>
<svg class="i" style="left:2596.0px;top:161.0px;color:#ddd;" width="36" height="36" viewBox="0 0 16 16" fill="none" stroke="currentColor" stroke-width="1" stroke-linecap="round" stroke-linejoin="round"><g transform="translate(8 8)"><g transform="rotate(0)"><path d="M-1.200-6.200a3.400 3.400 0 0 1 5.200 1.600v4.400l-3.600 2"/></g><g transform="rotate(60)"><path d="M-1.200-6.200a3.400 3.400 0 0 1 5.200 1.600v4.400l-3.600 2"/></g><g transform="rotate(120)"><path d="M-1.200-6.200a3.400 3.400 0 0 1 5.200 1.600v4.400l-3.600 2"/></g><g transform="rotate(180)"><path d="M-1.200-6.200a3.400 3.400 0 0 1 5.200 1.600v4.400l-3.600 2"/></g><g transform="rotate(240)"><path d="M-1.200-6.200a3.400 3.400 0 0 1 5.200 1.600v4.400l-3.600 2"/></g><g transform="rotate(300)"><path d="M-1.200-6.200a3.400 3.400 0 0 1 5.200 1.600v4.400l-3.600 2"/></g></g></svg>
<svg class="i" style="left:2645.5px;top:160.5px;color:#ccc;" width="37" height="37" viewBox="0 0 16 16" fill="none" stroke="currentColor" stroke-width="0.9" stroke-linecap="round" stroke-linejoin="round"><path d="M3.5 8.5v5h9V5.5L9.5 2.5H8M9.5 2.5v3h3"/><path d="M2 6.5V5a1.5 1.5 0 0 1 1.5-1.5H6M4.5 1.8 6.2 3.5 4.5 5.2"/></svg>
<svg class="i" style="left:2703.0px;top:163.0px;color:#6a6a6a;" width="32" height="32" viewBox="0 0 16 16" fill="none" stroke="currentColor" stroke-width="1" stroke-linecap="round" stroke-linejoin="round"><path d="M8 13.5V2.8M3.6 7 8 2.6 12.4 7"/></svg>
<svg class="i" style="left:2755.0px;top:163.0px;color:#6a6a6a;" width="32" height="32" viewBox="0 0 16 16" fill="none" stroke="currentColor" stroke-width="1" stroke-linecap="round" stroke-linejoin="round"><path d="M8 2.5v10.7M3.6 9 8 13.4 12.4 9"/></svg>
<svg class="i" style="left:2806.0px;top:163.0px;color:#ccc;" width="32" height="32" viewBox="0 0 16 16" fill="none" stroke="currentColor" stroke-width="1" stroke-linecap="round" stroke-linejoin="round"><path d="M10 2.5H6.3a3 3 0 0 0 0 6H8M8 2.5v11M11 2.5v11M6.5 13.5h6M10 2.5h2.5"/></svg>
<svg class="i" style="left:2858.0px;top:163.0px;color:#ccc;" width="32" height="32" viewBox="0 0 16 16" fill="none" stroke="currentColor" stroke-width="1" stroke-linecap="round" stroke-linejoin="round"><path d="M1.8 4.2 5.8 2.5v9.3l-4 1.7zM5.8 2.5l4.4 1.7v9.3l-4.4-1.7M10.2 4.2l4-1.7v9.3l-4 1.7"/></svg>
<svg class="i" style="left:2911.0px;top:164.0px;color:#ccc;" width="32" height="32" viewBox="0 0 16 16" fill="none" stroke="currentColor" stroke-width="1" stroke-linecap="round" stroke-linejoin="round"><rect x="2.050" y="2.050" width="11.900" height="11.900" rx="1.500"/><path d="M8 2v12"/></svg>
<svg class="i" style="left:2962.0px;top:163.0px;color:#ccc;" width="32" height="32" viewBox="0 0 16 16" fill="none" stroke="currentColor" stroke-width="1" stroke-linecap="round" stroke-linejoin="round"><g fill="currentColor" stroke="none"><circle cx="3" cy="8" r="1.100"/><circle cx="8" cy="8" r="1.100"/><circle cx="13" cy="8" r="1.100"/></g></svg>
<div class="t" style="left:660px;top:218.0px;height:38px;line-height:38px;font-size:26.9px;color:#a9a9a9;letter-spacing:0.238px;">container</div>
<svg class="i" style="left:777.0px;top:223.0px;color:#a9a9a9;" width="28" height="28" viewBox="0 0 16 16" fill="none" stroke="currentColor" stroke-width="1.15" stroke-linecap="round" stroke-linejoin="round"><path d="M5.8 3.2 10.6 8l-4.8 4.8"/></svg>
<div class="t" style="left:806px;top:218.0px;height:38px;line-height:38px;font-size:26.9px;color:#a9a9a9;letter-spacing:-0.455px;">canvas</div>
<svg class="i" style="left:893.0px;top:223.0px;color:#a9a9a9;" width="28" height="28" viewBox="0 0 16 16" fill="none" stroke="currentColor" stroke-width="1.15" stroke-linecap="round" stroke-linejoin="round"><path d="M5.8 3.2 10.6 8l-4.8 4.8"/></svg>
<svg class="i" style="left:926.0px;top:224.0px" width="24" height="24" viewBox="0 0 28 28"><rect x="0" y="0" width="28" height="28" fill="#3c84d6"/><text x="9" y="25" font-family="Liberation Sans,sans-serif" font-weight="700" font-size="14.500" fill="#16233a" textLength="17" lengthAdjust="spacingAndGlyphs">TS</text></svg>
<div class="t" style="left:967px;top:218.0px;height:38px;line-height:38px;font-size:26.9px;color:#a9a9a9;letter-spacing:-0.102px;">useCanvasContainer.ts</div>
<svg class="i" style="left:1246.0px;top:223.0px;color:#a9a9a9;" width="28" height="28" viewBox="0 0 16 16" fill="none" stroke="currentColor" stroke-width="1.15" stroke-linecap="round" stroke-linejoin="round"><path d="M5.8 3.2 10.6 8l-4.8 4.8"/></svg>
<svg class="i" style="left:1275.0px;top:221.0px;color:#75beff;" width="32" height="32" viewBox="0 0 16 16" fill="none" stroke="currentColor" stroke-width="1" stroke-linecap="round" stroke-linejoin="round"><path d="M4 3.2H2v9.6h2M12 3.2h2v9.6h-2"/><path d="M5 7.2 9.5 5.5 11 7l-4.5 1.8zM6.5 8.8v2L11 9V7"/></svg>
<div class="t" style="left:1314px;top:218.0px;height:38px;line-height:38px;font-size:26.9px;color:#a9a9a9;letter-spacing:-0.075px;">mapMemoImageToConfig</div>
<div class="clip" style="left:628px;top:258px;width:1098px;height:740px;background:#1f1f1f;">
<div class="b" style="left:1068px;top:0;width:2px;height:740px;background:#171717;"></div>
<div class="clip" style="left:1070px;top:0;width:28px;height:40px;"><div class="cl" style="left:-948px;top:-2px;">                                                             <span class="v">asset</span>.<span class="v">height</span></div></div>
<div class="ln" style="left:14px;top:106px;">437</div>
<div class="cl" style="left:122px;top:106px;">      <span class="v">height</span>: <span class="v">initialSize</span>.<span class="v">height</span>,</div>
<div class="ln" style="left:14px;top:142px;">438</div>
<div class="cl" style="left:122px;top:142px;">      <span class="v">kind</span>,</div>
<div class="ln" style="left:14px;top:178px;">439</div>
<div class="cl" style="left:122px;top:178px;">    <span class="b2">}</span><span class="b1">)</span>;</div>
<div class="ln" style="left:14px;top:214px;">440</div>
<div class="cl" style="left:122px;top:214px;">    <span class="k">const</span> <span class="c">desiredPosition</span>: <span class="ty">Coordinate</span> = <span class="b1">{</span></div>
<div class="ln" style="left:14px;top:250px;">441</div>
<div class="cl" style="left:122px;top:250px;">      <span class="v">x</span>: <span class="hy">-</span><span class="v">translationX</span>.<span class="v">value</span> + <span class="v">initialSize</span>.<span class="v">width</span>,</div>
<div class="ln" style="left:14px;top:286px;">442</div>
<div class="cl" style="left:122px;top:286px;">      <span class="v">y</span>: <span class="hy">-</span><span class="v">translationY</span>.<span class="v">value</span> + <span class="v">initialSize</span>.<span class="v">height</span> + <span class="n">140</span>,</div>
<div class="ln" style="left:14px;top:322px;">443</div>
<div class="cl" style="left:122px;top:322px;">    <span class="b1">}</span>;</div>
<div class="ln" style="left:14px;top:358px;">444</div>
<div class="cl" style="left:122px;top:358px;">    <span class="k">const</span> <span class="c">clampedPosition</span> = <span class="f">clampPositionToGrid</span><span class="b1">(</span><span class="v">desiredPosition</span>, <span class="b2">{</span></div>
<div class="ln" style="left:14px;top:394px;">445</div>
<div class="cl" style="left:122px;top:394px;">      <span class="v">width</span>: <span class="v">initialSize</span>.<span class="v">width</span>,</div>
<div class="ln" style="left:14px;top:430px;">446</div>
<div class="cl" style="left:122px;top:430px;">      <span class="v">height</span>: <span class="v">initialSize</span>.<span class="v">height</span>,</div>
<div class="ln" style="left:14px;top:466px;">447</div>
<div class="cl" style="left:122px;top:466px;">    <span class="b2">}</span><span class="b1">)</span>;</div>
<div class="ln" style="left:14px;top:502px;">448</div>
<div class="cl" style="left:122px;top:502px;">    <span class="k">const</span> <span class="c">newImage</span>: <span class="ty">DraggableImageConfig</span> = <span class="b1">{</span></div>
<div class="ln" style="left:14px;top:538px;">449</div>
<div class="cl" style="left:122px;top:538px;">      ...<span class="v">baseImage</span>,</div>
<div class="ln" style="left:14px;top:574px;">450</div>
<div class="cl" style="left:122px;top:574px;">      <span class="v">position</span>: <span class="v">clampedPosition</span>,</div>
<div class="ln" style="left:14px;top:610px;">451</div>
<div class="cl" style="left:122px;top:610px;">    <span class="b1">}</span>;</div>
<div class="ln" style="left:14px;top:646px;">452</div>
<div class="cl" style="left:122px;top:646px;">    <span class="f">setImages</span><span class="b1">(</span><span class="b2">(</span><span class="v">current</span><span class="b2">)</span> <span class="k">=&gt;</span> <span class="b2">[</span>...<span class="v">current</span>, <span class="v">newImage</span><span class="b2">]</span><span class="b1">)</span>;</div>
<div class="ln" style="left:14px;top:682px;">453</div>
<div class="cl" style="left:122px;top:682px;">    <span class="f">setSelectedEntityId</span><span class="b1">(</span><span class="v">newImage</span>.<span class="v">id</span><span class="b1">)</span>;</div>
<div class="ln" style="left:14px;top:718px;">454</div>
<div class="cl" style="left:122px;top:718px;">  <span class="b3">}</span>, <span class="b2">[</span><span class="v">clampPositionToGrid</span>, <span class="v">pickImageFromLibrary</span>, <span class="v">translationX</span>, <span class="v">translationY</span>, <span class="v">initialSize</span><span class="b2">]</span><span class="b2">)</span>;</div>
<div class="b" style="left:122.0px;top:106px;width:2px;height:634px;background:#404040;"></div>
<div class="b" style="left:150.9px;top:106px;width:2px;height:612px;background:#404040;"></div>
<div class="b" style="left:179.8px;top:106px;width:2px;height:72px;background:#404040;"></div>
<div class="b" style="left:179.8px;top:250px;width:2px;height:72px;background:#404040;"></div>
<div class="b" style="left:179.8px;top:394px;width:2px;height:72px;background:#404040;"></div>
<div class="b" style="left:179.8px;top:538px;width:2px;height:72px;background:#404040;"></div>
<div class="b" style="left:0;top:0;width:1066px;height:108px;background:#1f1f1f;box-shadow:0 4px 5px rgba(0,0,0,.85);"></div>
<div class="clip" style="left:0;top:0;width:1066px;height:108px;">
<div class="ln" style="left:14px;top:0px;">191</div>
<div class="cl" style="left:122px;top:0px;"><span class="e">export</span> <span class="k">const</span> <span class="f">useCanvasContainer</span> = <span class="b1">(</span><span class="v">options</span>?: <span class="ty">UseCanvasOptions</span><span class="b1">)</span> <span class="k">=&gt;</span> <span class="b1">{</span></div>
<div class="ln" style="left:14px;top:36px;">428</div>
<div class="cl" style="left:122px;top:36px;">  <span class="k">const</span> <span class="c">handleCreateImage</span> = <span class="f">useCallback</span><span class="b2">(</span><span class="k">async</span> <span class="b3">()</span> <span class="k">=&gt;</span> <span class="b3">{</span></div>
<div class="ln" style="left:14px;top:72px;">435</div>
<div class="cl" style="left:122px;top:72px;">    <span class="k">const</span> <span class="c">baseImage</span> = <span class="f">createDraggableImage</span><span class="b1">(</span><span class="v">asset</span>.<span class="v">uri</span>, <span class="b2">{</span></div>
</div>
</div>
<div class="clip" style="left:1796px;top:258px;width:1168px;height:740px;background:#1f1f1f;">
<div class="b" style="left:1140px;top:0;width:2px;height:740px;background:#171717;"></div>
<div class="clip" style="left:1142px;top:0;width:26px;height:40px;"><div class="cl" style="left:-1020px;top:-2px;">                                                             <span class="c">asset</span>.<span class="v">height</span></div></div>
<div class="ln" style="left:14px;top:106px;">437</div>
<div class="cl" style="left:122px;top:106px;">      <span class="v">height</span>: <span class="c">initialSize</span>.<span class="v">height</span>,</div>
<div class="ln" style="left:14px;top:142px;">438</div>
<div class="cl" style="left:122px;top:142px;">      <span class="v">kind</span>,</div>
<div class="ln" style="left:14px;top:178px;">439</div>
<div class="cl" style="left:122px;top:178px;">    <span class="b2">}</span><span class="b1">)</span>;</div>
<div class="ln" style="left:14px;top:214px;">440</div>
<div class="cl" style="left:122px;top:214px;">    <span class="k">const</span> <span class="c">desiredPosition</span>: <span class="ty">Coordinate</span> = <span class="b1">{</span></div>
<div class="ln" style="left:14px;top:250px;">441</div>
<div class="cl" style="left:122px;top:250px;">      <span class="v">x</span>: <span class="hy">-</span><span class="c">translationX</span>.<span class="v">value</span> + <span class="c">initialSize</span>.<span class="v">width</span>,</div>
<div class="ln" style="left:14px;top:286px;">442</div>
<div class="cl" style="left:122px;top:286px;">      <span class="v">y</span>: <span class="hy">-</span><span class="c">translationY</span>.<span class="v">value</span> + <span class="c">initialSize</span>.<span class="v">height</span> + <span class="n">140</span>,</div>
<div class="ln" style="left:14px;top:322px;">443</div>
<div class="cl" style="left:122px;top:322px;">    <span class="b1">}</span>;</div>
<div class="ln" style="left:14px;top:358px;">444</div>
<div class="cl" style="left:122px;top:358px;">    <span class="k">const</span> <span class="c">clampedPosition</span> = <span class="f">clampPositionToGrid</span><span class="b1">(</span><span class="c">desiredPosition</span>, <span class="b2">{</span></div>
<div class="ln" style="left:14px;top:394px;">445</div>
<div class="cl" style="left:122px;top:394px;">      <span class="v">width</span>: <span class="c">initialSize</span>.<span class="v">width</span>,</div>
<div class="ln" style="left:14px;top:430px;">446</div>
<div class="cl" style="left:122px;top:430px;">      <span class="v">height</span>: <span class="c">initialSize</span>.<span class="v">height</span>,</div>
<div class="ln" style="left:14px;top:466px;">447</div>
<div class="cl" style="left:122px;top:466px;">    <span class="b2">}</span><span class="b1">)</span>;</div>
<div class="ln" style="left:14px;top:502px;">448</div>
<div class="cl" style="left:122px;top:502px;">    <span class="k">const</span> <span class="c">newImage</span>: <span class="ty">DraggableImageConfig</span> = <span class="b1">{</span></div>
<div class="ln" style="left:14px;top:538px;">449</div>
<div class="cl" style="left:122px;top:538px;">      ...<span class="c">baseImage</span>,</div>
<div class="ln" style="left:14px;top:574px;">450</div>
<div class="cl" style="left:122px;top:574px;">      <span class="v">position</span>: <span class="c">clampedPosition</span>,</div>
<div class="ln" style="left:14px;top:610px;">451</div>
<div class="cl" style="left:122px;top:610px;">    <span class="b1">}</span>;</div>
<div class="ln" style="left:14px;top:646px;">452</div>
<div class="cl" style="left:122px;top:646px;">    <span class="f">setImages</span><span class="b1">(</span><span class="b2">(</span><span class="v">current</span><span class="b2">)</span> <span class="k">=&gt;</span> <span class="b2">[</span>...<span class="v">current</span>, <span class="c">newImage</span><span class="b2">]</span><span class="b1">)</span>;</div>
<div class="ln" style="left:14px;top:682px;">453</div>
<div class="cl" style="left:122px;top:682px;">    <span class="f">setSelectedEntityId</span><span class="b1">(</span><span class="c">newImage</span>.<span class="v">id</span><span class="b1">)</span>;</div>
<div class="ln" style="left:14px;top:718px;">454</div>
<div class="cl" style="left:122px;top:718px;">  <span class="b3">}</span>, <span class="b2">[</span><span class="f">clampPositionToGrid</span>, <span class="f">pickImageFromLibrary</span>, <span class="c">translationX</span>, <span class="c">translationY</span>, <span class="c">initialSize</span><span class="b2">]</span><span class="b2">)</span>;</div>
<div class="b" style="left:122.0px;top:106px;width:2px;height:634px;background:#404040;"></div>
<div class="b" style="left:150.9px;top:106px;width:2px;height:612px;background:#404040;"></div>
<div class="b" style="left:179.8px;top:106px;width:2px;height:72px;background:#404040;"></div>
<div class="b" style="left:179.8px;top:250px;width:2px;height:72px;background:#404040;"></div>
<div class="b" style="left:179.8px;top:394px;width:2px;height:72px;background:#404040;"></div>
<div class="b" style="left:179.8px;top:538px;width:2px;height:72px;background:#404040;"></div>
<div class="b" style="left:0;top:0;width:1138px;height:108px;background:#1f1f1f;box-shadow:0 4px 5px rgba(0,0,0,.85);"></div>
<div class="clip" style="left:0;top:0;width:1138px;height:108px;">
<div class="ln" style="left:14px;top:0px;">191</div>
<div class="cl" style="left:122px;top:0px;"><span class="e">export</span> <span class="k">const</span> <span class="f">useCanvasContainer</span> = <span class="b1">(</span><span class="v">options</span>?: <span class="ty">UseCanvasOptions</span><span class="b1">)</span> <span class="k">=&gt;</span> <span class="b1">{</span></div>
<div class="ln" style="left:14px;top:36px;">428</div>
<div class="cl" style="left:122px;top:36px;">  <span class="k">const</span> <span class="f">handleCreateImage</span> = <span class="f">useCallback</span><span class="b2">(</span><span class="k">async</span> <span class="b3">()</span> <span class="k">=&gt;</span> <span class="b3">{</span></div>
<div class="ln" style="left:14px;top:72px;">435</div>
<div class="cl" style="left:122px;top:72px;">    <span class="k">const</span> <span class="c">baseImage</span> = <span class="f">createDraggableImage</span><span class="b1">(</span><span class="c">asset</span>.<span class="v">uri</span>, <span class="b2">{</span></div>
</div>
</div>
<div class="b" style="left:1699px;top:259px;width:27px;height:3px;background:#6b6b6b;"></div>
<div class="b" style="left:1726px;top:258px;width:70px;height:740px;background:#1f1f1f;box-shadow:inset 6px 0 6px -4px rgba(0,0,0,.7),inset -6px 0 6px -4px rgba(0,0,0,.7),inset 0 6px 6px -4px rgba(0,0,0,.5);"></div>
<div class="b" style="left:2964px;top:258px;width:60px;height:740px;background:#1f1f1f;"></div>
<div class="b" style="left:2937px;top:344px;width:27px;height:4px;background:#8a8a8a;"></div>
<div class="b" style="left:2964px;top:518px;width:60px;height:40px;background:#444;"></div>
<div class="b" style="left:628px;top:998px;width:2396px;height:922px;background:#181818;"></div>
<div class="b" style="left:628px;top:998px;width:2396px;height:2px;background:#2b2b2b;"></div>
<div class="t" style="left:668px;top:1018.5px;height:31px;line-height:31px;font-size:22px;color:#9d9d9d;letter-spacing:-0.532px;">PROBLEMS</div>
<div class="b" style="left:796px;top:1018px;width:32px;height:32px;background:#3574d1;border-radius:16px;"></div>
<div class="t" style="left:796px;top:1020.0px;height:28px;line-height:28px;font-size:20px;color:#fff;width:32px;text-align:center;">2</div>
<div class="t" style="left:872px;top:1018.5px;height:31px;line-height:31px;font-size:22px;color:#9d9d9d;letter-spacing:0.260px;">OUTPUT</div>
<div class="t" style="left:1012px;top:1018.5px;height:31px;line-height:31px;font-size:22px;color:#9d9d9d;letter-spacing:-0.225px;">DEBUG CONSOLE</div>
<div class="t" style="left:1250px;top:1018.5px;height:31px;line-height:31px;font-size:22px;color:#e7e7e7;letter-spacing:-0.154px;">TERMINAL</div>
<div class="b" style="left:1246px;top:1055px;width:119px;height:2px;background:#3574d1;"></div>
<div class="t" style="left:1409px;top:1018.5px;height:31px;line-height:31px;font-size:22px;color:#9d9d9d;letter-spacing:-0.478px;">PORTS</div>
<div class="t" style="left:1532px;top:1018.5px;height:31px;line-height:31px;font-size:22px;color:#9d9d9d;letter-spacing:-0.032px;">POSTMAN CONSOLE</div>
<svg class="i" style="left:2552.0px;top:1018.0px;color:#ccc;" width="34" height="34" viewBox="0 0 16 16" fill="none" stroke="currentColor" stroke-width="0.95" stroke-linecap="round" stroke-linejoin="round"><rect x="1.5" y="2" width="13" height="12" rx="1.5"/><path d="M4.2 5.6 6.8 8l-2.6 2.4M8 11h3.5"/></svg>
<div class="t" style="left:2594px;top:1017.5px;height:35px;line-height:35px;font-size:24.8px;color:#ccc;letter-spacing:-1.197px;">zsh</div>
<svg class="i" style="left:2649.0px;top:1019.0px;color:#ccc;" width="32" height="32" viewBox="0 0 16 16" fill="none" stroke="currentColor" stroke-width="1" stroke-linecap="round" stroke-linejoin="round"><path d="M8 2.5v11M2.5 8h11"/></svg>
<svg class="i" style="left:2688.0px;top:1026.0px;color:#ccc;" width="20" height="20" viewBox="0 0 16 16" fill="none" stroke="currentColor" stroke-width="1.3" stroke-linecap="round" stroke-linejoin="round"><path d="M3.2 5.8 8 10.6l4.8-4.8"/></svg>
<svg class="i" style="left:2729.0px;top:1020.0px;color:#ccc;" width="32" height="32" viewBox="0 0 16 16" fill="none" stroke="currentColor" stroke-width="1" stroke-linecap="round" stroke-linejoin="round"><rect x="2.050" y="2.050" width="11.900" height="11.900" rx="1.500"/><path d="M8 2v12"/></svg>
<svg class="i" style="left:2778.0px;top:1017.0px;color:#ccc;" width="36" height="36" viewBox="0 0 16 16" fill="none" stroke="currentColor" stroke-width="0.9" stroke-linecap="round" stroke-linejoin="round"><path d="M2.5 4.2h11M6 4V2.6h4V4M3.8 4.2l.6 9.3h7.2l.6-9.3M6.6 6.5v5M9.4 6.5v5"/></svg>
<svg class="i" style="left:2832.0px;top:1019.0px;color:#ccc;" width="32" height="32" viewBox="0 0 16 16" fill="none" stroke="currentColor" stroke-width="1" stroke-linecap="round" stroke-linejoin="round"><g fill="currentColor" stroke="none"><circle cx="3" cy="8" r="1.100"/><circle cx="8" cy="8" r="1.100"/><circle cx="13" cy="8" r="1.100"/></g></svg>
<div class="b" style="left:2886px;top:1018px;width:2px;height:32px;background:#5a5a5a;"></div>
<svg class="i" style="left:2910.0px;top:1018.0px;color:#ccc;" width="32" height="32" viewBox="0 0 16 16" fill="none" stroke="currentColor" stroke-width="1" stroke-linecap="round" stroke-linejoin="round"><path d="M2.5 6V3.3a.8.8 0 0 1 .8-.8H6M10 2.5h2.7a.8.8 0 0 1 .8.8V6M13.5 10v2.7a.8.8 0 0 1-.8.8H10M6 13.5H3.3a.8.8 0 0 1-.8-.8V10"/></svg>
<svg class="i" style="left:2962.0px;top:1018.0px;color:#ccc;" width="32" height="32" viewBox="0 0 16 16" fill="none" stroke="currentColor" stroke-width="1.1" stroke-linecap="round" stroke-linejoin="round"><path d="M3.800 3.800l8.400 8.400M12.200 3.800l-8.400 8.400"/></svg>
<div class="clip" style="left:668px;top:1080px;width:2328px;height:780px;">
<div class="tl" style="top:0px;color:#d2d2d2;">nakatanihiromasa@nakatanihiromasanoMacBook<span class="hy">-</span>Pro CanvasMemo % npx expo start <span class="hy">-</span><span class="hy">-</span>tunnel</div>
<div class="tl" style="top:28px;color:#ccc;"></div>
<div class="tl" style="top:56px;color:#8e8e8e;">Starting project at /Users/nakatanihiromasa/develop/CanvasMemo</div>
<div class="tl" style="top:84px;color:#8e8e8e;">React Compiler enabled</div>
<div class="tl" style="top:112px;color:#8e8e8e;">Starting Metro Bundler</div>
<div class="tl" style="top:140px;color:#ccc;"><span style="color:#4cb875;font-weight:700">✔</span><span style="font-weight:700;color:#d8d8d8"> The package @expo/ngrok@^4.1.0 is required to use tunnels, would you like to install it globally?</span><span style="color:#8a8a8a"> … </span>yes</div>
<div class="tl" style="top:168px;color:#ccc;">Installing @expo/ngrok@^4.1.0...</div>
<div class="tl" style="top:196px;color:#ccc;">&gt; npm install <span class="hy">-</span><span class="hy">-</span>global @expo/ngrok@^4.1.0</div>
<div class="tl" style="top:224px;color:#d3605a;">Error: Failed to install @expo/ngrok@^4.1.0 globally: npm install <span class="hy">-</span><span class="hy">-</span>global @expo/ngrok@^4.1.0 exited with non<span class="hy">-</span>zero code: 243</div>
<div class="tl" style="top:252px;color:#8e8e8e;">Error: npm install <span class="hy">-</span><span class="hy">-</span>global @expo/ngrok@^4.1.0 exited with non<span class="hy">-</span>zero code: 243</div>
<div class="tl" style="top:280px;color:#8e8e8e;">    at ChildProcess.completionListener (/Users/nakatanihiromasa/develop/CanvasMemo/node_modules/@expo/spawn<span class="hy">-</span>async/src/spawnAsync.ts:67:13)</div>
<div class="tl" style="top:308px;color:#8e8e8e;">    at Object.onceWrapper (node:events:639:26)</div>
<div class="tl" style="top:336px;color:#8e8e8e;">    at ChildProcess.emit (node:events:524:28)</div>
<div class="tl" style="top:364px;color:#8e8e8e;">    at maybeClose (node:internal/child_process:1101:16)</div>
<div class="tl" style="top:392px;color:#8e8e8e;">    at Process.ChildProcess._handle.onexit (node:internal/child_process:304:5)</div>
<div class="tl" style="top:420px;color:#8e8e8e;">    ...</div>
<div class="tl" style="top:448px;color:#8e8e8e;">    at spawnAsync (/Users/nakatanihiromasa/develop/CanvasMemo/node_modules/@expo/spawn<span class="hy">-</span>async/src/spawnAsync.ts:28:21)</div>
<div class="tl" style="top:476px;color:#8e8e8e;">    at NpmPackageManager.runAsync (/Users/nakatanihiromasa/develop/CanvasMemo/node_modules/@expo/package<span class="hy">-</span>manager/src/node/BasePackageManager.ts:72:22)</div>
<div class="tl" style="top:504px;color:#8e8e8e;">    at NpmPackageManager.addGlobalAsync (/Users/nakatanihiromasa/develop/CanvasMemo/node_modules/@expo/package<span class="hy">-</span>manager/src/node/NpmPackageManager.ts:71:17)</div>
<div class="tl" style="top:532px;color:#8e8e8e;">    at NgrokResolver.installAsync (/Users/nakatanihiromasa/develop/CanvasMemo/node_modules/@expo/cli/src/start/doctor/ngrok/ExternalModule.ts:122:32)</div>
<div class="tl" style="top:560px;color:#8e8e8e;">    at processTicksAndRejections (node:internal/process/task_queues:105:5)</div>
<div class="tl" style="top:588px;color:#8e8e8e;">    at AsyncNgrok.startAsync (/Users/nakatanihiromasa/develop/CanvasMemo/node_modules/@expo/cli/src/start/server/AsyncNgrok.ts:74:5)</div>
<div class="tl" style="top:616px;color:#8e8e8e;">    at MetroBundlerDevServer._startTunnelAsync (/Users/nakatanihiromasa/develop/CanvasMemo/node_modules/@expo/cli/src/start/server/BundlerDevServer.ts:256:5)</div>
<div class="tl" style="top:644px;color:#8e8e8e;">    at MetroBundlerDevServer.postStartAsync (/Users/nakatanihiromasa/develop/CanvasMemo/node_modules/@expo/cli/src/start/server/BundlerDevServer.ts:229:7)</div>
<div class="tl" style="top:672px;color:#8e8e8e;">    at MetroBundlerDevServer.startAsync (/Users/nakatanihiromasa/develop/CanvasMemo/node_modules/@expo/cli/src/start/server/BundlerDevServer.ts:164:5)</div>
<div class="tl" style="top:700px;color:#8e8e8e;">    at DevServerManager.startAsync (<span style="text-decoration:underline;text-decoration-thickness:2px;text-underline-offset:3px;">/Users/nakatanihiromasa/develop/CanvasMemo/node_modules/@expo/cli/src/start/server/DevServerManager.ts:184:7</span>)</div>
<div class="tl" style="top:728px;color:#d2d2d2;">nakatanihiromasa@nakatanihiromasanoMacBook<span class="hy">-</span>Pro CanvasMemo % sudo npm i <span class="hy">-</span>g @expo/ngrok@^4.1.0 <span class="hy">-</span><span class="hy">-</span>unsafe<span class="hy">-</span>perm<span style="display:inline-block;width:14px;height:28px;background:#ccc;vertical-align:top;"></span></div>
</div>
<div class="b" style="left:634px;top:1082px;width:6px;height:726px;background:#36363c;"></div>
<svg class="i" style="left:640.0px;top:1084.0px;color:#e0544b;" width="20" height="20" viewBox="0 0 16 16" fill="none" stroke="currentColor" stroke-width="1.6" stroke-linecap="round" stroke-linejoin="round"><circle cx="8" cy="8" r="6" /><path d="M5.700 5.700l4.600 4.600M10.300 5.700l-4.600 4.600"/></svg>
<svg class="i" style="left:633.0px;top:1805.0px;color:#78b6fa;" width="32" height="32" viewBox="0 0 16 16" fill="none" stroke="currentColor" stroke-width="1.05" stroke-linecap="round" stroke-linejoin="round"><path d="M6.5 2.2c.5 2.6 1.7 3.8 4.3 4.3-2.6.5-3.8 1.7-4.3 4.3-.5-2.6-1.7-3.8-4.3-4.3 2.6-.5 3.8-1.7 4.3-4.3z"/><path d="M12 9.6c.3 1.3.8 1.8 2.1 2.1-1.3.3-1.8.8-2.1 2.1-.3-1.3-.8-1.8-2.1-2.1 1.3-.3 1.8-.8 2.1-2.1z"/></svg>
<div class="b" style="left:2996px;top:1080px;width:28px;height:1px;background:#0a0a0a;"></div>
<div class="b" style="left:2996px;top:1080px;width:1px;height:840px;background:#0a0a0a;"></div>
<div class="b" style="left:2997px;top:1494px;width:27px;height:426px;background:#3e3e3e;"></div>
<div class="b" style="left:2997px;top:1466px;width:9px;height:24px;background:#3f83a8;"></div>
<div class="b" style="left:3015px;top:1480px;width:9px;height:24px;background:#e05852;"></div>
<div class="b" style="left:2997px;top:1850px;width:9px;height:23px;background:#6e6e6e;"></div>
<div class="b" style="left:0px;top:1920px;width:3024px;height:44px;background:#181818;"></div>
<div class="b" style="left:0px;top:1920px;width:3024px;height:2px;background:#2b2b2b;"></div>
<div class="b" style="left:0px;top:1922px;width:68px;height:42px;background:#3574d1;"></div>
<svg class="i" style="left:19.0px;top:1928.0px;color:#fff;" width="30" height="30" viewBox="0 0 16 16" fill="none" stroke="currentColor" stroke-width="1.1" stroke-linecap="round" stroke-linejoin="round"><path d="M3.600 5 7.600 8.900 3.600 13.100M12.300 1.200 8.500 5.200 12.300 9.300" stroke-linecap="butt" stroke-linejoin="miter"/></svg>
<svg class="i" style="left:82.0px;top:1927.5px;color:#ccc;" width="30" height="30" viewBox="0 0 16 16" fill="none" stroke="currentColor" stroke-width="1" stroke-linecap="round" stroke-linejoin="round"><circle cx="4.5" cy="3.2" r="1.6"/><circle cx="4.5" cy="12.8" r="1.6"/><circle cx="11.5" cy="5.2" r="1.6"/><path d="M4.5 4.8v6.4M11.5 6.8c0 2.6-3.5 2.2-6.6 4.6"/></svg>
<div class="t" style="left:119px;top:1925.0px;height:35px;line-height:35px;font-size:24.8px;color:#ccc;letter-spacing:-0.047px;">main+</div>
<svg class="i" style="left:199.0px;top:1927.5px;color:#ccc;" width="30" height="30" viewBox="0 0 16 16" fill="none" stroke="currentColor" stroke-width="1" stroke-linecap="round" stroke-linejoin="round"><path d="M5.2 11.5H4.4a2.9 2.9 0 0 1-.3-5.8 4 4 0 0 1 7.8.4 2.7 2.7 0 0 1-.2 5.4h-.9"/><path d="M8 13.8V8M5.9 9.9 8 7.8l2.1 2.1"/></svg>
<svg class="i" style="left:259.0px;top:1927.5px;color:#ccc;" width="30" height="30" viewBox="0 0 16 16" fill="none" stroke="currentColor" stroke-width="1" stroke-linecap="round" stroke-linejoin="round"><circle cx="8" cy="8" r="6.3"/><path d="M5.6 5.6l4.8 4.8M10.4 5.6l-4.8 4.8"/></svg>
<div class="t" style="left:295px;top:1925.5px;height:34px;line-height:34px;font-size:24px;color:#ccc;">2</div>
<svg class="i" style="left:315.0px;top:1927.5px;color:#ccc;" width="30" height="30" viewBox="0 0 16 16" fill="none" stroke="currentColor" stroke-width="1" stroke-linecap="round" stroke-linejoin="round"><path d="M8 2 14.5 13.5h-13z"/><path d="M8 6.2v3.6"/><circle cx="8" cy="11.6" r=".6" fill="currentColor" stroke="none"/></svg>
<div class="t" style="left:352px;top:1925.5px;height:34px;line-height:34px;font-size:24px;color:#ccc;">0</div>
<svg class="i" style="left:1679.0px;top:1927.5px;color:#ccc;" width="30" height="30" viewBox="0 0 16 16" fill="none" stroke="currentColor" stroke-width="1" stroke-linecap="round" stroke-linejoin="round"><circle cx="8" cy="8" r="3"/><path d="M8 1v4M8 11v4"/></svg>
<div class="t" style="left:1717px;top:1925.0px;height:35px;line-height:35px;font-size:24.8px;color:#ccc;letter-spacing:0.355px;">Not Committed Yet (Staged)</div>
<div class="t" style="left:2068px;top:1925.0px;height:35px;line-height:35px;font-size:24.8px;color:#ccc;letter-spacing:0.306px;">Ln 143, Col 1</div>
<div class="t" style="left:2253px;top:1925.0px;height:35px;line-height:35px;font-size:24.8px;color:#ccc;letter-spacing:0.079px;">Spaces: 2</div>
<div class="t" style="left:2396px;top:1925.5px;height:34px;line-height:34px;font-size:24px;color:#ccc;letter-spacing:0.901px;">UTF-8</div>
<div class="t" style="left:2502px;top:1925.5px;height:34px;line-height:34px;font-size:24px;color:#ccc;letter-spacing:-1.005px;">LF</div>
<svg class="i" style="left:2560.0px;top:1927.5px;color:#ccc;" width="30" height="30" viewBox="0 0 16 16" fill="none" stroke="currentColor" stroke-width="1" stroke-linecap="round" stroke-linejoin="round"><path d="M5.5 2.5c-1.6 0-1.8.8-1.8 2.2 0 1.600-.2 2.700-1.700 3.300 1.500.6 1.700 1.700 1.700 3.300 0 1.400.2 2.200 1.800 2.200M10.500 2.500c1.600 0 1.800.8 1.800 2.200 0 1.600.2 2.700 1.700 3.300-1.500.6-1.700 1.700-1.700 3.300 0 1.400-.2 2.200-1.800 2.200"/></svg>
<div class="t" style="left:2601px;top:1925.0px;height:35px;line-height:35px;font-size:24.8px;color:#ccc;letter-spacing:0.434px;">TypeScript</div>
<svg class="i" style="left:2753.0px;top:1926.5px;color:#ccc;" width="32" height="32" viewBox="0 0 16 16" fill="none" stroke="currentColor" stroke-width="1.3" stroke-linecap="round" stroke-linejoin="round"><rect x="3" y="2.300" width="4.700" height="5.600" rx="1.900"/><rect x="8.600" y="2.300" width="4.700" height="5.600" rx="1.900"/><path d="M1.300 9.500c0-1.500.800-2.500 1.800-2.700h10.100c1 .2 1.800 1.200 1.800 2.700V11c-1.600 1.800-4.100 2.700-6.850 2.700S2.900 12.800 1.300 11z" fill="currentColor" stroke="none"/><rect x="5.600" y="8.700" width="1.200" height="3" rx=".6" fill="#181818" stroke="none"/><rect x="9.500" y="8.700" width="1.200" height="3" rx=".6" fill="#181818" stroke="none"/></svg>
<svg class="i" style="left:2814.0px;top:1928.5px;color:#ccc;" width="28" height="28" viewBox="0 0 16 16" fill="none" stroke="currentColor" stroke-width="1" stroke-linecap="round" stroke-linejoin="round"><path d="M1 9.200 3.800 12 10.500 4.500M7 11l1 1 6.700-7.500"/></svg>
<div class="t" style="left:2851px;top:1925.0px;height:35px;line-height:35px;font-size:24.8px;color:#ccc;letter-spacing:0.258px;">Prettier</div>
<svg class="i" style="left:2966.0px;top:1927.5px;color:#ccc;" width="30" height="30" viewBox="0 0 16 16" fill="none" stroke="currentColor" stroke-width="1" stroke-linecap="round" stroke-linejoin="round"><path d="M8.500 2.500A4 4 0 0 0 4 6.500v3L2.800 11.800h10.400L12 9.500V8"/><path d="M6.500 12c0 .9.600 1.600 1.500 1.600s1.500-.7 1.500-1.600"/><circle cx="12" cy="4" r="2.200" fill="currentColor" stroke="none"/></svg>
</div></body></html>
